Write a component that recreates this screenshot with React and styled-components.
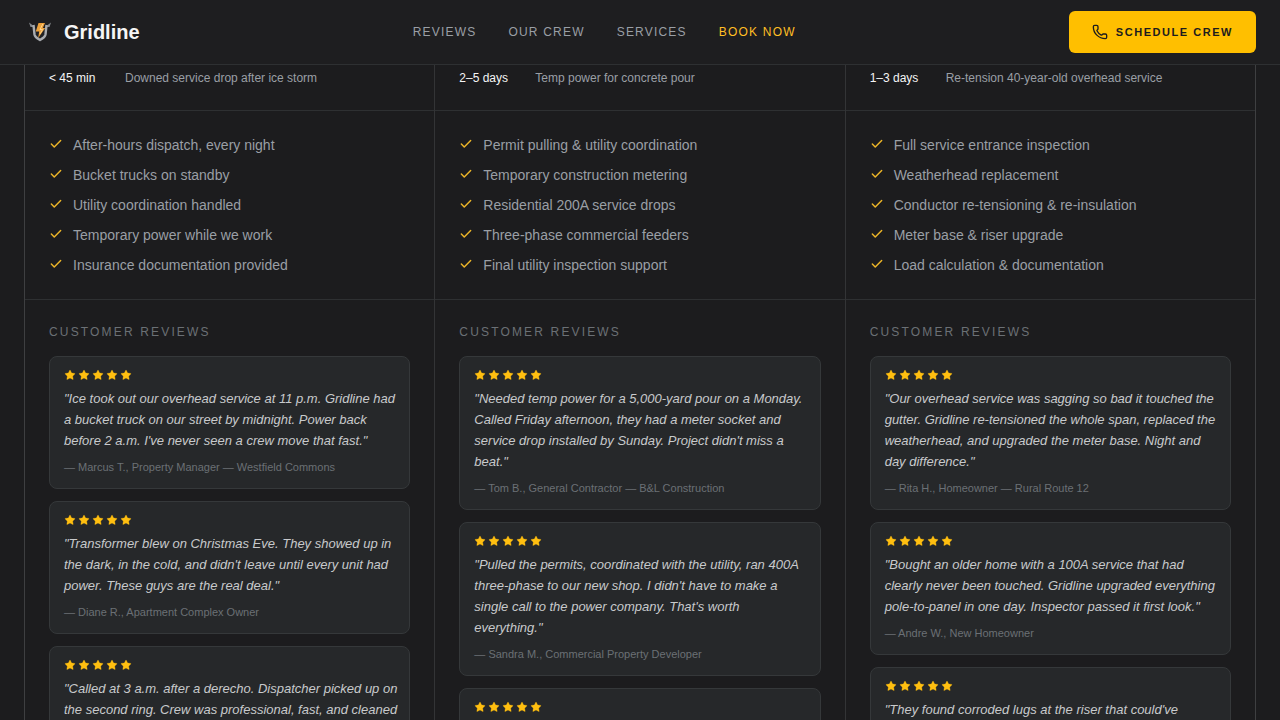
import React from "react";
import styled, { createGlobalStyle } from "styled-components";
import { Check, Phone, Star } from "lucide-react";

const GlobalStyle = createGlobalStyle`
  * {
    box-sizing: border-box;
  }

  body {
    margin: 0;
    background: #1c1c1e;
    color: #f5f5f5;
    font-family: "Liberation Sans", Arial, sans-serif;
  }

  h3, p, ul, dl, dt, dd, blockquote, figure {
    margin: 0;
    padding: 0;
  }
`;

const Header = styled.header`
  position: sticky;
  top: 0;
  z-index: 10;
  display: flex;
  align-items: center;
  justify-content: space-between;
  height: 65px;
  padding: 0 24px;
  background: #1e1e20;
  border-bottom: 1px solid #2e3032;
`;

const Brand = styled.a`
  display: flex;
  align-items: center;
  gap: 8px;
  color: #f5f5f5;
  font-size: 20px;
  font-weight: 700;
  line-height: 24px;
  text-decoration: none;
`;

const Nav = styled.nav`
  display: flex;
  gap: 32px;
`;

const NavLink = styled.a`
  color: ${props => (props.$active ? "#ffbf24" : "#9a9fa5")};
  font-size: 12px;
  line-height: 16px;
  letter-spacing: 0.1em;
  text-transform: uppercase;
  text-decoration: none;
`;

const ScheduleButton = styled.button`
  display: flex;
  align-items: center;
  gap: 8px;
  height: 42px;
  padding: 0 23px;
  border: 0;
  border-radius: 6px;
  background: #ffbf00;
  color: #1c1c1e;
  font-family: inherit;
  font-size: 11px;
  font-weight: 700;
  letter-spacing: 0.14em;
  text-transform: uppercase;
  cursor: pointer;
`;

const Main = styled.main`
  padding: 0 24px;
`;

const Columns = styled.div`
  display: grid;
  grid-template-columns: repeat(3, minmax(0, 1fr));
  gap: 1px;
  border: 1px solid #3e3f41;
  border-top: 0;
  background: #333436;
`;

const Column = styled.section`
  background: #1c1c1e;
`;

const Stats = styled.dl`
  display: grid;
  grid-template-columns: 52px 1fr;
  gap: 24px;
  padding: 5px 24px 24px;
  border-bottom: 1px solid #2e3032;
  font-size: 12px;
  line-height: 16px;
`;

const Time = styled.dt`
  color: #f5f5f5;
  white-space: nowrap;
`;

const Job = styled.dd`
  color: #9a9fa5;
`;

const Features = styled.ul`
  display: flex;
  flex-direction: column;
  gap: 10px;
  padding: 24px;
  border-bottom: 1px solid #2e3032;
  list-style: none;
`;

const Feature = styled.li`
  display: flex;
  gap: 10px;
  color: #9a9fa5;
  font-size: 14px;
  line-height: 20px;

  svg {
    flex: none;
    margin-top: 2px;
    color: #ecb528;
  }
`;

const Reviews = styled.div`
  display: flex;
  flex-direction: column;
  gap: 12px;
  padding: 24px;
`;

const ReviewsTitle = styled.h3`
  margin-bottom: 4px;
  color: #6b7075;
  font-size: 12px;
  font-weight: 400;
  line-height: 16px;
  letter-spacing: 0.18em;
  text-transform: uppercase;
`;

const Card = styled.figure`
  padding: 12px 10px 12px 14px;
  border: 1px solid #35383a;
  border-radius: 8px;
  background: #26282a;
`;

const Stars = styled.div`
  display: flex;
  gap: 2px;
  margin-bottom: 7px;
  color: #ffbf10;
`;

const Quote = styled.blockquote`
  min-height: 63px;
  margin-bottom: 8px;
  color: #c8cacc;
  font-size: 13px;
  font-style: italic;
  line-height: 21px;
`;

const Author = styled.figcaption`
  color: #6b7075;
  font-size: 11px;
  line-height: 17px;
`;

const services = [
  {
    time: "< 45 min",
    job: "Downed service drop after ice storm",
    features: [
      "After-hours dispatch, every night",
      "Bucket trucks on standby",
      "Utility coordination handled",
      "Temporary power while we work",
      "Insurance documentation provided"
    ],
    reviews: [
      {
        quote:
          "\"Ice took out our overhead service at 11 p.m. Gridline had a bucket truck on our street by midnight. Power back before 2 a.m. I've never seen a crew move that fast.\"",
        author: "— Marcus T., Property Manager — Westfield Commons"
      },
      {
        quote:
          "\"Transformer blew on Christmas Eve. They showed up in the dark, in the cold, and didn't leave until every unit had power. These guys are the real deal.\"",
        author: "— Diane R., Apartment Complex Owner"
      },
      {
        quote:
          "\"Called at 3 a.m. after a derecho. Dispatcher picked up on the second ring. Crew was professional, fast, and cleaned"
      }
    ]
  },
  {
    time: "2–5 days",
    job: "Temp power for concrete pour",
    features: [
      "Permit pulling & utility coordination",
      "Temporary construction metering",
      "Residential 200A service drops",
      "Three-phase commercial feeders",
      "Final utility inspection support"
    ],
    reviews: [
      {
        quote:
          "\"Needed temp power for a 5,000-yard pour on a Monday. Called Friday afternoon, they had a meter socket and service drop installed by Sunday. Project didn't miss a beat.\"",
        author: "— Tom B., General Contractor — B&L Construction"
      },
      {
        quote:
          "\"Pulled the permits, coordinated with the utility, ran 400A three-phase to our new shop. I didn't have to make a single call to the power company. That's worth everything.\"",
        author: "— Sandra M., Commercial Property Developer"
      },
      {}
    ]
  },
  {
    time: "1–3 days",
    job: "Re-tension 40-year-old overhead service",
    features: [
      "Full service entrance inspection",
      "Weatherhead replacement",
      "Conductor re-tensioning & re-insulation",
      "Meter base & riser upgrade",
      "Load calculation & documentation"
    ],
    reviews: [
      {
        quote:
          "\"Our overhead service was sagging so bad it touched the gutter. Gridline re-tensioned the whole span, replaced the weatherhead, and upgraded the meter base. Night and day difference.\"",
        author: "— Rita H., Homeowner — Rural Route 12"
      },
      {
        quote:
          "\"Bought an older home with a 100A service that had clearly never been touched. Gridline upgraded everything pole-to-panel in one day. Inspector passed it first look.\"",
        author: "— Andre W., New Homeowner"
      },
      {
        quote: "\"They found corroded lugs at the riser that could've"
      }
    ]
  }
];

const Logo = () => (
  <svg width="32" height="32" viewBox="0 0 32 32" fill="none" aria-hidden="true">
    {/* crossarm */}
    <path d="M5 6.5 L9 9.5 H23 L27 6.5 L25.5 11 H6.5 Z" fill="#85898e" />
    {/* shield */}
    <path
      d="M9.5 9 L10.5 18.5 C10.8 20.8 13 22.3 16 24 C19 22.3 21.2 20.8 21.5 18.5 L22.5 9"
      fill="#202124"
      stroke="#a9acb0"
      strokeWidth="2.4"
      strokeLinejoin="round"
    />
    {/* bolt */}
    <path d="M14.5 7 H21 L18.8 12 H21.2 L14.2 22 L15.2 15.5 H11.8 Z" fill="#eda23c" />
    <path d="M18.8 8 L16 13.5 H18.6 L16 18" stroke="#ffd48a" strokeWidth="1" />
  </svg>
);

const Review = ({ quote, author }) => (
  <Card>
    <Stars role="img" aria-label="5 out of 5 stars">
      {[1, 2, 3, 4, 5].map(n => (
        <Star key={n} size={12} fill="currentColor" strokeWidth={0.6} />
      ))}
    </Stars>
    <Quote>{quote}</Quote>
    {author && <Author>{author}</Author>}
  </Card>
);

const Service = ({ time, job, features, reviews }) => (
  <Column>
    <Stats>
      <Time>{time}</Time>
      <Job>{job}</Job>
    </Stats>
    <Features>
      {features.map(feature => (
        <Feature key={feature}>
          <Check size={14} strokeWidth={2.5} />
          <span>{feature}</span>
        </Feature>
      ))}
    </Features>
    <Reviews>
      <ReviewsTitle>Customer Reviews</ReviewsTitle>
      {reviews.map((review, index) => (
        <Review key={index} {...review} />
      ))}
    </Reviews>
  </Column>
);

const App = () => (
  <>
    <GlobalStyle />
    <Header>
      <Brand href="#top">
        <Logo />
        <span>Gridline</span>
      </Brand>
      <Nav>
        <NavLink href="#reviews">Reviews</NavLink>
        <NavLink href="#crew">Our Crew</NavLink>
        <NavLink href="#services">Services</NavLink>
        <NavLink href="#book" $active>Book Now</NavLink>
      </Nav>
      <ScheduleButton type="button">
        <Phone size={16} />
        Schedule Crew
      </ScheduleButton>
    </Header>
    <Main>
      <Columns>
        {services.map(service => (
          <Service key={service.time} {...service} />
        ))}
      </Columns>
    </Main>
  </>
);

export default App;
